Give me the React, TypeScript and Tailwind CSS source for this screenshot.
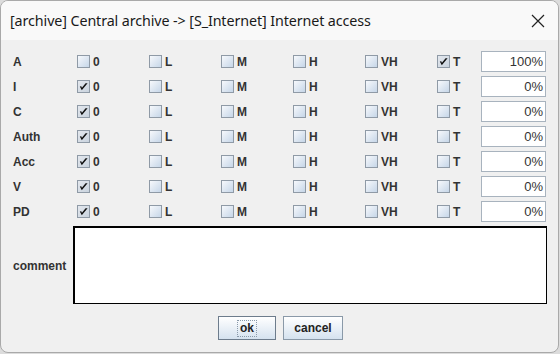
import React from "react";

const LEVELS = ["0", "L", "M", "H", "VH", "T"];

const ROWS: { label: string; checked: string; value: string }[] = [
  { label: "A", checked: "T", value: "100%" },
  { label: "I", checked: "0", value: "0%" },
  { label: "C", checked: "0", value: "0%" },
  { label: "Auth", checked: "0", value: "0%" },
  { label: "Acc", checked: "0", value: "0%" },
  { label: "V", checked: "0", value: "0%" },
  { label: "PD", checked: "0", value: "0%" },
];

function Check({ on }: { on: boolean }) {
  return (
    <span
      className={`relative w-[13px] h-[13px] shrink-0 border border-[#8f9aa6] ${
        on
          ? "bg-gradient-to-br from-[#e4e8ee] to-[#c9d3de]"
          : "bg-gradient-to-br from-[#f7f9fc] to-[#c6d6e8]"
      }`}
    >
      {on && (
        <svg
          viewBox="0 0 13 13"
          className="absolute -left-px -top-px w-[13px] h-[13px]"
        >
          <path
            d="M2.8 6.6 L4.8 10.2 L10.6 3.2 L8.6 3.2 L4.9 7.8 L4.3 6.3 Z"
            fill="#111"
          />
        </svg>
      )}
    </span>
  );
}

export default function App() {
  return (
    <div className="w-[560px] h-[354px] bg-[#dcdcdc] font-['Liberation_Sans',sans-serif]">
      <div className="w-[559px] h-[353px] rounded-[8px] border border-[#a9a9a9] bg-[#f0f0f0] overflow-hidden flex flex-col">
        {/* title bar */}
        <div className="h-[39px] shrink-0 bg-[#f9f9f9] flex items-center justify-between pl-[9px] pr-[13px]">
          <span className="font-['Noto_Sans',sans-serif] text-[14.3px] text-[#1a1a1a] tracking-[-0.1px]">
            [archive] Central archive -&gt; [S_Internet] Internet access
          </span>
          <svg viewBox="0 0 14 14" className="w-[14px] h-[14px]">
            <path d="M1 1 L13 13 M13 1 L1 13" stroke="#222" strokeWidth="1.2" />
          </svg>
        </div>

        <div className="flex flex-col pt-[9px] pl-[12px]">
          {ROWS.map((row) => (
            <div key={row.label} className="flex items-center h-[25px]">
              <span className="w-[64px] text-[12px] font-bold text-[#333]">
                {row.label}
              </span>
              {LEVELS.map((lv, j) => (
                <div
                  key={lv}
                  className={`flex items-center gap-[3px] ${
                    j === 5 ? "w-[44px]" : "w-[72px]"
                  }`}
                >
                  <Check on={row.checked === lv} />
                  <span className="text-[12px] font-bold text-[#333]">{lv}</span>
                </div>
              ))}
              <div className="w-[65px] h-[21px] bg-white border border-[#a8b3be] flex items-center justify-end pr-[2px] text-[13px] text-[#333]">
                {row.value}
              </div>
            </div>
          ))}

          <div className="flex items-center mt-[2px] h-[78px]">
            <span className="w-[60px] text-[12px] font-bold text-[#333] pt-[2px]">
              comment
            </span>
            <div className="w-[474px] h-[78px] bg-white border border-black border-t-2 border-l-2" />
          </div>

          <div className="flex justify-center gap-[7px] mt-[12px] pr-[12px] pl-[2px]">
            <button className="w-[58px] h-[24px] border border-[#6d7c8c] bg-gradient-to-b from-[#ffffff] to-[#d5e2ef] text-[12px] font-bold text-[#222] flex items-center justify-center">
              <span className="border border-dotted border-[#8a9aaa] px-[2px] leading-[15px]">
                ok
              </span>
            </button>
            <button className="w-[60px] h-[24px] border border-[#8a99a8] bg-gradient-to-b from-[#ffffff] to-[#d5e2ef] text-[12px] font-bold text-[#222]">
              cancel
            </button>
          </div>
        </div>
      </div>
    </div>
  );
}
